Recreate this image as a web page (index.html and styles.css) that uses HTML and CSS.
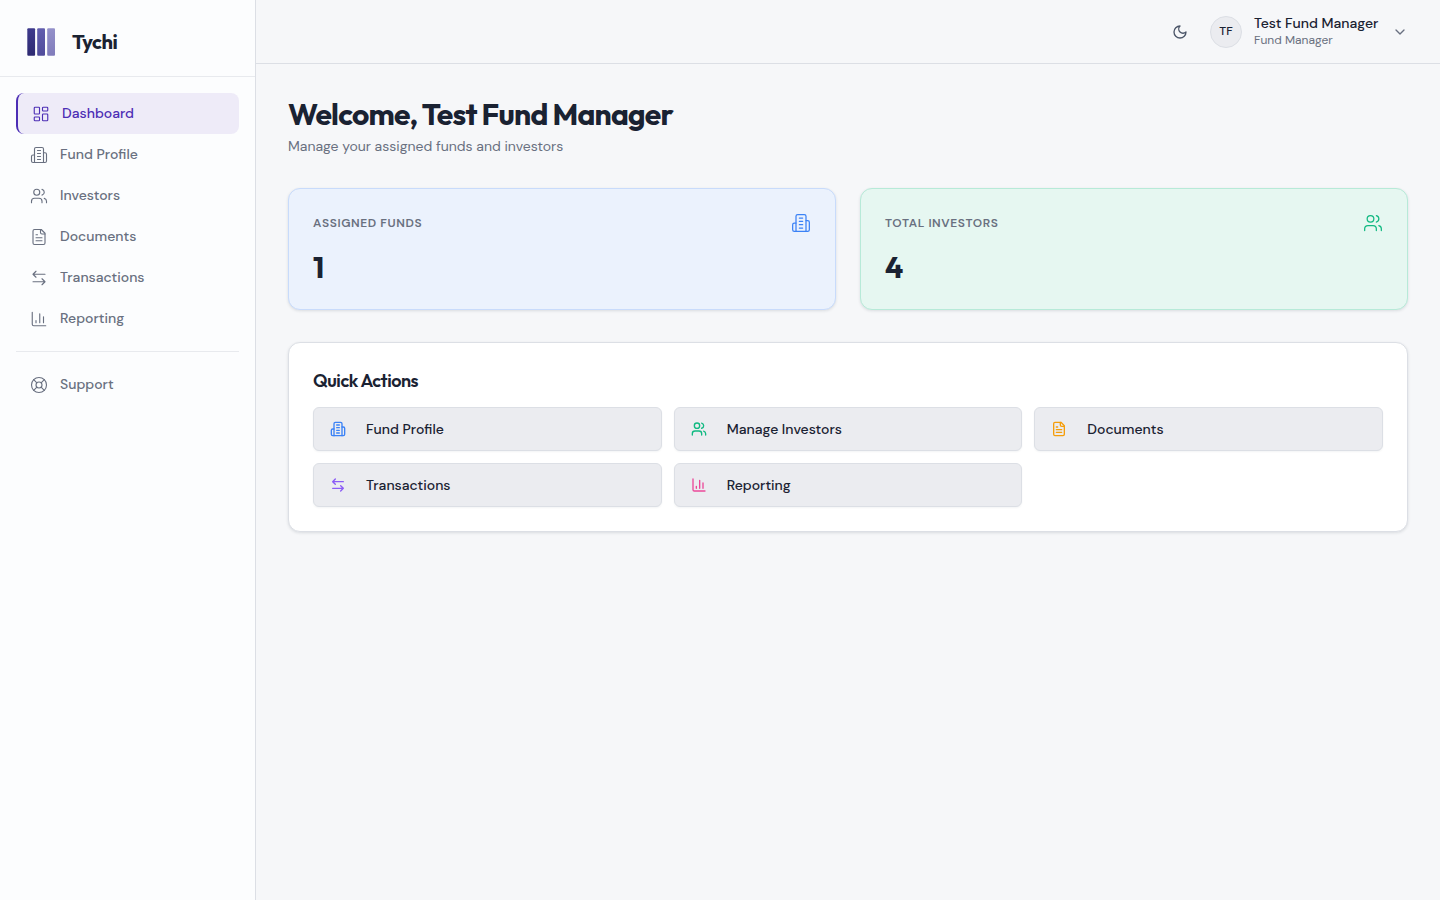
FILE: index.html
```html
<!DOCTYPE html>
<html lang="en">
<head>
<meta charset="utf-8">
<meta name="viewport" content="width=device-width, initial-scale=1">
<title>Tychi – Dashboard</title>
<link rel="stylesheet" href="styles.css">
</head>
<body>
<svg class="sprite" aria-hidden="true">
  <symbol id="i-dashboard" viewBox="0 0 24 24"><rect x="3" y="3" width="7" height="9" rx="1"/><rect x="14" y="3" width="7" height="5" rx="1"/><rect x="14" y="12" width="7" height="9" rx="1"/><rect x="3" y="16" width="7" height="5" rx="1"/></symbol>
  <symbol id="i-building" viewBox="0 0 24 24"><path d="M6 22V4a2 2 0 0 1 2-2h8a2 2 0 0 1 2 2v18Z"/><path d="M6 12H4a2 2 0 0 0-2 2v6a2 2 0 0 0 2 2h2"/><path d="M18 9h2a2 2 0 0 1 2 2v9a2 2 0 0 1-2 2h-2"/><path d="M10 6h4M10 10h4M10 14h4M10 18h4"/></symbol>
  <symbol id="i-users" viewBox="0 0 24 24"><path d="M16 21v-2a4 4 0 0 0-4-4H6a4 4 0 0 0-4 4v2"/><circle cx="9" cy="7" r="4"/><path d="M22 21v-2a4 4 0 0 0-3-3.87"/><path d="M16 3.13a4 4 0 0 1 0 7.75"/></symbol>
  <symbol id="i-file" viewBox="0 0 24 24"><path d="M15 2H6a2 2 0 0 0-2 2v16a2 2 0 0 0 2 2h12a2 2 0 0 0 2-2V7Z"/><path d="M14 2v4a2 2 0 0 0 2 2h4"/><path d="M10 9H8M16 13H8M16 17H8"/></symbol>
  <symbol id="i-transfer" viewBox="0 0 24 24"><path d="M8 3 4 7l4 4M4 7h16M16 21l4-4-4-4M20 17H4"/></symbol>
  <symbol id="i-chart" viewBox="0 0 24 24"><path d="M3 3v16a2 2 0 0 0 2 2h16M18 17V9M13 17V5M8 17v-3"/></symbol>
  <symbol id="i-support" viewBox="0 0 24 24"><circle cx="12" cy="12" r="10"/><path d="m4.93 4.93 4.24 4.24M14.83 9.17l4.24-4.24M14.83 14.83l4.24 4.24M9.17 14.83l-4.24 4.24"/><circle cx="12" cy="12" r="4"/></symbol>
  <symbol id="i-moon" viewBox="0 0 24 24"><path d="M12 3a6 6 0 0 0 9 9 9 9 0 1 1-9-9Z"/></symbol>
  <symbol id="i-chevron" viewBox="0 0 24 24"><path d="m6 9 6 6 6-6"/></symbol>
</svg>
<div class="app">
  <aside class="sidebar">
    <div class="brand">
      <svg class="brand-mark" viewBox="0 0 36 36" aria-hidden="true">
        <defs>
          <linearGradient id="g1" x1="0" y1="0" x2="0" y2="1"><stop offset="0" stop-color="#3e3a8c"/><stop offset="1" stop-color="#2e2a72"/></linearGradient>
          <linearGradient id="g2" x1="0" y1="0" x2="0" y2="1"><stop offset="0" stop-color="#625eae"/><stop offset="1" stop-color="#504c9b"/></linearGradient>
          <linearGradient id="g3" x1="0" y1="0" x2="0" y2="1"><stop offset="0" stop-color="#9491ca"/><stop offset="1" stop-color="#807cbb"/></linearGradient>
        </defs>
        <rect x="3.3" y="4.2" width="7.8" height="27.6" rx="1" fill="url(#g1)"/>
        <rect x="13.2" y="4.2" width="7.8" height="27.6" rx="1" fill="url(#g2)"/>
        <rect x="23.2" y="4.2" width="7.8" height="27.6" rx="1" fill="url(#g3)"/>
      </svg>
      <span class="brand-name">Tychi</span>
    </div>
    <nav class="nav" aria-label="Main">
      <a class="nav-item active" href="#" aria-current="page"><svg class="icon"><use href="#i-dashboard"/></svg>Dashboard</a>
      <a class="nav-item" href="#"><svg class="icon"><use href="#i-building"/></svg>Fund Profile</a>
      <a class="nav-item" href="#"><svg class="icon"><use href="#i-users"/></svg>Investors</a>
      <a class="nav-item" href="#"><svg class="icon"><use href="#i-file"/></svg>Documents</a>
      <a class="nav-item" href="#"><svg class="icon"><use href="#i-transfer"/></svg>Transactions</a>
      <a class="nav-item" href="#"><svg class="icon"><use href="#i-chart"/></svg>Reporting</a>
      <hr class="nav-divider">
      <a class="nav-item" href="#"><svg class="icon"><use href="#i-support"/></svg>Support</a>
    </nav>
  </aside>
  <div class="content">
    <header class="topbar">
      <button class="theme-toggle" type="button" aria-label="Toggle theme"><svg class="icon"><use href="#i-moon"/></svg></button>
      <button class="account" type="button">
        <span class="avatar">TF</span>
        <span class="account-text"><span class="account-name">Test Fund Manager</span><span class="account-role">Fund Manager</span></span>
        <svg class="icon"><use href="#i-chevron"/></svg>
      </button>
    </header>
    <main class="main">
      <div class="heading">
        <h1 class="title">Welcome, Test Fund Manager</h1>
        <p class="subtitle">Manage your assigned funds and investors</p>
      </div>
      <section class="stats">
        <article class="card stat blue">
          <div class="stat-head"><h2 class="stat-label">Assigned Funds</h2><svg class="icon"><use href="#i-building"/></svg></div>
          <p class="stat-value">1</p>
        </article>
        <article class="card stat green">
          <div class="stat-head"><h2 class="stat-label">Total Investors</h2><svg class="icon"><use href="#i-users"/></svg></div>
          <p class="stat-value">4</p>
        </article>
      </section>
      <section class="card quick">
        <h2 class="quick-title">Quick Actions</h2>
        <div class="actions">
          <button class="action" type="button"><svg class="icon c-blue"><use href="#i-building"/></svg>Fund Profile</button>
          <button class="action" type="button"><svg class="icon c-green"><use href="#i-users"/></svg>Manage Investors</button>
          <button class="action" type="button"><svg class="icon c-amber"><use href="#i-file"/></svg>Documents</button>
          <button class="action" type="button"><svg class="icon c-violet"><use href="#i-transfer"/></svg>Transactions</button>
          <button class="action" type="button"><svg class="icon c-pink"><use href="#i-chart"/></svg>Reporting</button>
        </div>
      </section>
    </main>
  </div>
</div>
</body>
</html>
```
FILE: styles.css
```css
:root {
  --body: "DM Sans", Inter, sans-serif;
  --display: Outfit, Lato, sans-serif;
  --ink: #1a2232;
  --muted: #697080;
  --line: #dcdfe5;
}

* { box-sizing: border-box; }

body {
  margin: 0;
  background: #f6f7f9;
  color: var(--ink);
  font-family: var(--body);
  font-size: 14px;
  line-height: 21px;
}

h1, h2, p { margin: 0; }

button {
  font: inherit;
  color: inherit;
  background: none;
  border: 0;
  padding: 0;
  cursor: pointer;
}

.sprite { display: none; }

.icon {
  width: 16px;
  height: 16px;
  flex: none;
  fill: none;
  stroke: currentColor;
  stroke-width: 2;
  stroke-linecap: round;
  stroke-linejoin: round;
}

.app { display: flex; min-height: 100vh; }

.sidebar {
  width: 256px;
  flex: none;
  background: #fcfdfe;
  border-right: 1px solid var(--line);
}

.brand {
  display: flex;
  align-items: center;
  gap: 12px;
  padding: 24px 24px 16px;
  border-bottom: 1px solid #e8eaee;
}

.brand-mark { width: 36px; height: 36px; }

.brand-name,
.title,
.stat-value,
.quick-title {
  font-family: var(--display);
  letter-spacing: -0.025em;
}

.brand-name {
  font-size: 20px;
  font-weight: 700;
  line-height: 28px;
}

.nav { padding: 16px; }

.nav-item {
  display: flex;
  align-items: center;
  gap: 12px;
  padding: 10px 14px;
  border-radius: 8px;
  color: var(--muted);
  font-weight: 500;
  text-decoration: none;
}

.nav-item .icon { width: 18px; height: 18px; stroke-width: 1.5; }

.nav-item.active {
  background: #eeebf8;
  border-left: 2px solid #4c2eb5;
  color: #4c2eb5;
}

.nav-divider {
  margin: 12px 0;
  border: 0;
  border-top: 1px solid #e8eaee;
}

.content { flex: 1; min-width: 0; }

.topbar {
  display: flex;
  align-items: center;
  justify-content: flex-end;
  gap: 12px;
  height: 64px;
  padding: 0 32px;
  border-bottom: 1px solid var(--line);
}

.theme-toggle {
  display: grid;
  place-items: center;
  width: 36px;
  height: 36px;
  color: #4b5568;
}

.account {
  display: flex;
  align-items: center;
  gap: 12px;
  text-align: left;
  color: var(--muted);
}

.avatar {
  display: grid;
  place-items: center;
  width: 32px;
  height: 32px;
  border: 1px solid var(--line);
  border-radius: 50%;
  background: #ebecf0;
  color: var(--ink);
  font-size: 12px;
  font-weight: 500;
}

.account-text {
  display: flex;
  flex-direction: column;
  min-width: 126px;
  padding-bottom: 2px;
}

.account-name {
  color: var(--ink);
  font-weight: 500;
  line-height: 18px;
}

.account-role { font-size: 12px; line-height: 16px; }

.main { padding: 32px; }

.heading { margin-bottom: 32px; }

.title {
  font-size: 30px;
  font-weight: 700;
  line-height: 36px;
}

.subtitle {
  margin-top: 4px;
  color: var(--muted);
  line-height: 20px;
}

.stats {
  display: grid;
  grid-template-columns: repeat(2, 1fr);
  gap: 24px;
  margin-bottom: 32px;
}

.card {
  padding: 24px;
  border: 1px solid var(--line);
  border-radius: 12px;
  background: #fff;
  box-shadow: 0 1px 3px rgba(20, 30, 50, 0.12);
}

.stat.blue { background: #ebf2fd; border-color: #c8dbfb; }
.stat.green { background: #e6f7f1; border-color: #b7ead8; }

.stat-head {
  display: flex;
  align-items: center;
  justify-content: space-between;
  margin-bottom: 16px;
}

.stat-head .icon { width: 20px; height: 20px; stroke-width: 1.5; }
.blue .icon, .c-blue { color: #3b82f6; }
.green .icon, .c-green { color: #10b981; }
.c-amber { color: #f59e0b; }
.c-violet { color: #8b5cf6; }
.c-pink { color: #ec4899; }

.stat-label {
  color: var(--muted);
  font-size: 12px;
  font-weight: 600;
  line-height: 20px;
  letter-spacing: 0.05em;
  text-transform: uppercase;
}

.stat-value {
  font-size: 30px;
  font-weight: 700;
  line-height: 36px;
}

.quick-title {
  margin-bottom: 12px;
  font-size: 18px;
  font-weight: 600;
  line-height: 28px;
}

.actions {
  display: grid;
  grid-template-columns: repeat(3, 1fr);
  gap: 12px;
}

.action {
  display: flex;
  align-items: center;
  gap: 20px;
  height: 44px;
  padding: 0 16px;
  border: 1px solid var(--line);
  border-radius: 6px;
  background: #ebecf0;
  box-shadow: 0 1px 2px rgba(20, 30, 50, 0.05);
  font-weight: 500;
}
```
